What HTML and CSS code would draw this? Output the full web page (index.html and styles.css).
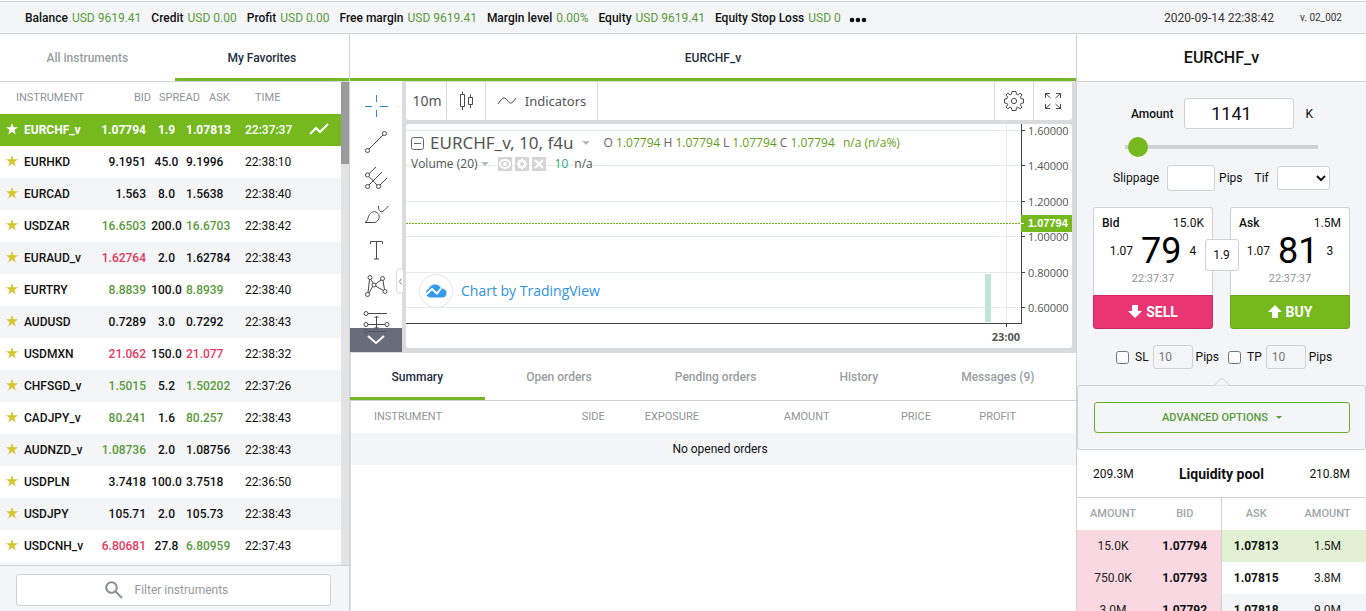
FILE: index.html
```html
<!DOCTYPE html>
<html lang="en">
<head>
<meta charset="utf-8">
<meta name="viewport" content="width=device-width, initial-scale=1">
<title>EURCHF_v</title>
<link rel="stylesheet" href="styles.css">
</head>
<body>
<svg class="sprite" aria-hidden="true">
  <symbol id="star" viewBox="0 0 12 12"><path d="M6 0l1.5 4.2H12L8.400 6.900 9.700 11.500 6 8.800 2.300 11.500 3.600 6.900 0 4.200h4.500z"/></symbol>
</svg>
<div class="app">
  <header class="topbar">
    <dl class="account">
      <div><dt>Balance</dt><dd>USD 9619.41</dd></div>
      <div><dt>Credit</dt><dd>USD 0.00</dd></div>
      <div><dt>Profit</dt><dd>USD 0.00</dd></div>
      <div><dt>Free margin</dt><dd>USD 9619.41</dd></div>
      <div><dt>Margin level</dt><dd>0.00%</dd></div>
      <div><dt>Equity</dt><dd>USD 9619.41</dd></div>
      <div><dt>Equity Stop Loss</dt><dd>USD 0</dd></div>
    </dl>
    <button class="more" aria-label="More"><svg width="18" height="6" viewBox="0 0 18 6"><circle cx="3" cy="3" r="2.300"/><circle cx="9" cy="3" r="2.300"/><circle cx="15" cy="3" r="2.300"/></svg></button>
    <time class="clock">2020-09-14 22:38:42</time>
    <span class="version">v. 02_002</span>
  </header>

  <div class="columns">
    <aside class="instruments">
      <nav class="tabs halves">
        <button class="tab">All instruments</button>
        <button class="tab active">My Favorites</button>
      </nav>
      <div class="list">
        <table class="quotes">
          <colgroup><col class="q-fav"><col class="q-name"><col class="q-bid"><col class="q-spread"><col class="q-ask"><col class="q-time"><col></colgroup>
          <thead><tr><th class="h-name" colspan="2">INSTRUMENT</th><th class="h-bid">BID</th><th class="h-spread">SPREAD</th><th class="h-ask">ASK</th><th class="h-time">TIME</th><th></th></tr></thead>
          <tbody>
            <tr class="selected"><td class="fav"><svg><use href="#star"/></svg></td><td>EURCHF_v</td><td>1.07794</td><td>1.9</td><td>1.07813</td><td>22:37:37</td><td><svg class="trend" width="22" height="14" viewBox="0 0 22 14"><path d="M2 12l6-6 4 4 8-8"/></svg></td></tr>
            <tr><td class="fav"><svg><use href="#star"/></svg></td><td>EURHKD</td><td>9.1951</td><td>45.0</td><td>9.1996</td><td>22:38:10</td><td></td></tr>
            <tr><td class="fav"><svg><use href="#star"/></svg></td><td>EURCAD</td><td>1.563</td><td>8.0</td><td>1.5638</td><td>22:38:40</td><td></td></tr>
            <tr><td class="fav"><svg><use href="#star"/></svg></td><td>USDZAR</td><td class="up">16.6503</td><td>200.0</td><td class="up">16.6703</td><td>22:38:42</td><td></td></tr>
            <tr><td class="fav"><svg><use href="#star"/></svg></td><td>EURAUD_v</td><td class="down">1.62764</td><td>2.0</td><td>1.62784</td><td>22:38:43</td><td></td></tr>
            <tr><td class="fav"><svg><use href="#star"/></svg></td><td>EURTRY</td><td class="up">8.8839</td><td>100.0</td><td class="up">8.8939</td><td>22:38:40</td><td></td></tr>
            <tr><td class="fav"><svg><use href="#star"/></svg></td><td>AUDUSD</td><td>0.7289</td><td>3.0</td><td>0.7292</td><td>22:38:43</td><td></td></tr>
            <tr><td class="fav"><svg><use href="#star"/></svg></td><td>USDMXN</td><td class="down">21.062</td><td>150.0</td><td class="down">21.077</td><td>22:38:32</td><td></td></tr>
            <tr><td class="fav"><svg><use href="#star"/></svg></td><td>CHFSGD_v</td><td class="up">1.5015</td><td>5.2</td><td class="up">1.50202</td><td>22:37:26</td><td></td></tr>
            <tr><td class="fav"><svg><use href="#star"/></svg></td><td>CADJPY_v</td><td class="up">80.241</td><td>1.6</td><td class="up">80.257</td><td>22:38:43</td><td></td></tr>
            <tr><td class="fav"><svg><use href="#star"/></svg></td><td>AUDNZD_v</td><td class="up">1.08736</td><td>2.0</td><td>1.08756</td><td>22:38:43</td><td></td></tr>
            <tr><td class="fav"><svg><use href="#star"/></svg></td><td>USDPLN</td><td>3.7418</td><td>100.0</td><td>3.7518</td><td>22:36:50</td><td></td></tr>
            <tr><td class="fav"><svg><use href="#star"/></svg></td><td>USDJPY</td><td>105.71</td><td>2.0</td><td>105.73</td><td>22:38:43</td><td></td></tr>
            <tr><td class="fav"><svg><use href="#star"/></svg></td><td>USDCNH_v</td><td class="down">6.80681</td><td>27.8</td><td class="up">6.80959</td><td>22:37:43</td><td></td></tr>
          </tbody>
        </table>
        <div class="scrollbar"><div class="thumb"></div></div>
      </div>
      <div class="filter">
        <label class="filter-box">
          <svg width="18" height="18" viewBox="0 0 18 18"><circle cx="6.500" cy="6.500" r="5.300"/><path d="M10.500 10.500l6.500 6.500"/></svg>
          <input type="text" placeholder="Filter instruments" aria-label="Filter instruments">
        </label>
      </div>
    </aside>

    <main class="center">
      <nav class="tabs"><button class="tab active wide">EURCHF_v</button></nav>

      <section class="chart">
        <div class="tools">
          <button class="tool cross" aria-label="Crosshair"><svg viewBox="0 0 28 28"><path d="M14.500 3v7M14.500 18v7M3 14.500h7M18 14.500h8"/></svg></button>
          <button class="tool" aria-label="Trend line"><svg viewBox="0 0 28 28"><circle cx="5.500" cy="22.500" r="2"/><circle cx="22.500" cy="5.500" r="2"/><path d="M7 21L21 7"/></svg></button>
          <button class="tool" aria-label="Pitchfork"><svg viewBox="0 0 28 28"><circle cx="5.500" cy="11" r="2"/><circle cx="5.500" cy="22.500" r="2"/><circle cx="16.500" cy="22.500" r="2"/><path d="M7 9.500L14 3M7 21L20 8M18 21l7-7M7 12.500l8 8.500"/></svg></button>
          <button class="tool" aria-label="Brush"><svg viewBox="0 0 28 28"><path d="M3 22.500c3-1 2.500-5 4.500-8s6-4 8.500-1 1 7-3 9zM16.500 6c-.5 5 3 7.500 5.500 4.500L26.500 6"/></svg></button>
          <button class="tool" aria-label="Text"><svg viewBox="0 0 28 28"><path d="M8.500 8V5.500h12V8M14.500 5.500v17.500M12 23h5"/></svg></button>
          <button class="tool" aria-label="Patterns"><svg viewBox="0 0 28 28"><circle cx="8" cy="5.500" r="2"/><circle cx="20.500" cy="6.500" r="2"/><circle cx="5.500" cy="22.500" r="2"/><circle cx="23" cy="19.500" r="2"/><circle cx="12" cy="13" r="2"/><path d="M7.500 7.500L6 20.500M9 7.500l2.500 4M13.500 12L19 8M21 8.500l1.500 9M10.500 14.500L7 21M13.500 14l8 4.500"/></svg></button>
          <button class="tool" aria-label="Projection"><svg viewBox="0 0 28 28"><circle cx="4" cy="5.500" r="2"/><circle cx="4" cy="16.500" r="2"/><circle cx="25" cy="16.500" r="2"/><circle cx="4" cy="23.500" r="2"/><path d="M6 5.500h19M6 16.500h17M6 23.500h19M14.500 8v13M12.500 10l2-2 2 2M12.500 19l2 2 2-2"/></svg></button>
          <button class="scroll-down" aria-label="Scroll down"><svg width="18" height="10" viewBox="0 0 18 10"><path d="M1 1l8 7 8-7"/></svg></button>
          <button class="collapse" aria-label="Collapse toolbar"><svg width="3" height="7" viewBox="0 0 3 7"><path d="M2.500 .5L.5 3.500l2 3"/></svg></button>
        </div>

        <div class="chart-body">
          <div class="chartbar">
            <button class="period">10m</button>
            <button class="style" aria-label="Chart style"><svg width="16" height="20" viewBox="0 0 16 20"><path d="M2.500 3.500h4v12h-4zM4.500 .5v3M4.500 15.500V19M10.500 6.500h4v7h-4zM12.500 3.500v3M12.500 13.500v3.500"/></svg></button>
            <button class="indicators"><svg width="20" height="10" viewBox="0 0 20 10"><path d="M1 8c4-6 6-8 9-4s4 5 9-2"/></svg>Indicators</button>
            <button class="square push" aria-label="Settings"><svg width="22" height="22" viewBox="0 0 22 22"><circle cx="11" cy="11" r="2.600"/><path d="M9 1.500h4l.5 2.700 1.400.6L17.200 3.200 19 5l-1.700 2.200.6 1.400 2.600.4v4l-2.600.4-.6 1.400L19 17l-1.800 1.800-2.300-1.600-1.400.6-.5 2.700H9l-.5-2.700-1.400-.6-2.300 1.600L3 17l1.700-2.200-.6-1.400L1.500 13V9l2.600-.4.6-1.400L3 5l1.800-1.800 2.300 1.600 1.400-.6z"/></svg></button>
            <button class="square" aria-label="Full screen"><svg width="18" height="18" viewBox="0 0 18 18"><path d="M1.500 6V1.500H6M1.500 1.500L6.500 6M12 1.500h4.500V6M16.500 1.500L11.500 6M1.500 12v4.500H6M1.500 16.500L6.500 12M12 16.500h4.500V12M16.500 16.500L11.500 12"/></svg></button>
          </div>

          <div class="pane">
            <div class="plot">
              <svg class="grid" width="100%" height="200">
                <path class="gridline" d="M0 6.500h4000M0 41.500h4000M0 77.500h4000M0 112.500h4000M0 148.500h4000M0 183.500h4000"/>
                <svg x="100%" overflow="visible"><path class="gridline" d="M-14.500 0v199"/><rect class="volume-bar" x="-36" y="150" width="6" height="48"/></svg>
                <path class="last" d="M0 99.500h4000"/>
                <path class="axis" d="M0 199.500h4000"/>
              </svg>
              <div class="legend">
                <div class="legend-row title">
                  <svg width="13" height="13" viewBox="0 0 13 13"><rect x=".5" y=".5" width="12" height="12" rx="2"/><path d="M3 6.500h7"/></svg>
                  <h2>EURCHF_v, 10, f4u</h2><i class="caret"></i>
                  <p class="ohlc">O <b>1.07794</b> H <b>1.07794</b> L <b>1.07794</b> C <b>1.07794</b> <b class="change">n/a (n/a%)</b></p>
                </div>
                <div class="legend-row volume">
                  <span>Volume (20)</span><i class="caret"></i>
                  <span class="minis">
                    <button aria-label="Hide"><svg viewBox="0 0 14 14"><ellipse cx="7" cy="7" rx="5" ry="4"/><circle cx="7" cy="7" r="1"/></svg></button>
                    <button aria-label="Format"><svg viewBox="0 0 14 14"><circle cx="7" cy="7" r="3"/><path d="M7 2v2M7 10v2M2 7h2M10 7h2M3.500 3.500L5 5M9 9l1.500 1.500M10.500 3.500L9 5M5 9l-1.500 1.500"/></svg></button>
                    <button aria-label="Delete"><svg viewBox="0 0 14 14"><path d="M3 3l8 8M11 3l-8 8"/></svg></button>
                  </span>
                  <span class="vol-value">10</span><span>n/a</span>
                </div>
              </div>
              <a class="brand" href="#">
                <span class="brand-mark"><svg width="22" height="14" viewBox="0 0 22 14"><path class="cloud" d="M5 13.500a4.500 4.500 0 0 1-1.500-8.500C5 2 7 .5 10 .5c3 0 5 1.500 6 4 3.500 0 5.500 2 5.500 4.500S20 13.500 17 13.500z"/><path class="swoosh" d="M1 10.500L7 5l5 4.500 4-5"/></svg></span>
                Chart by TradingView
              </a>
            </div>
            <div class="prices">
              <svg width="51" height="200">
                <path class="axis" d="M.5 0v200M0 6.500h4M0 41.500h4M0 77.500h4M0 112.500h4M0 148.500h4M0 183.500h4"/>
                <g class="ticks"><text x="7" y="11">1.60000</text><text x="7" y="46">1.40000</text><text x="7" y="82">1.20000</text><text x="7" y="117">1.00000</text><text x="7" y="153">0.80000</text><text x="7" y="188">0.60000</text></g>
                <rect class="tag" y="91" width="51" height="17"/><path class="tag-tick" d="M0 99.500h3"/><text class="tag-text" x="7" y="103">1.07794</text>
              </svg>
            </div>
            <div class="times"><span>23:00</span></div>
          </div>
        </div>
      </section>

      <section class="orders">
        <nav class="tabs">
          <button class="tab active">Summary</button>
          <button class="tab">Open orders</button>
          <button class="tab">Pending orders</button>
          <button class="tab">History</button>
          <button class="tab">Messages (9)</button>
        </nav>
        <table>
          <colgroup><col class="c1"><col class="c2"><col class="c3"><col class="c4"><col class="c5"><col></colgroup>
          <thead><tr><th class="first">INSTRUMENT</th><th>SIDE</th><th>EXPOSURE</th><th>AMOUNT</th><th>PRICE</th><th>PROFIT</th></tr></thead>
          <tbody><tr><td colspan="6">No opened orders</td></tr></tbody>
        </table>
      </section>
    </main>

    <aside class="ticket">
      <h1>EURCHF_v</h1>
      <form class="order" onsubmit="return false">
        <div class="amount-row">
          <label for="amount">Amount</label>
          <input id="amount" type="text" value="1141">
          <span>K</span>
        </div>
        <input class="slider" type="range" min="0" max="100" value="2" aria-label="Amount slider">
        <div class="options-row">
          <label for="slippage">Slippage</label>
          <input id="slippage" type="text"><span>Pips</span>
          <label class="tif" for="tif">Tif</label>
          <select id="tif"><option></option></select>
        </div>
        <div class="deal">
          <div class="side">
            <div class="quote">
              <div class="side-head"><b>Bid</b><span>15.0K</span></div>
              <div class="rate"><span>1.07</span><strong>79</strong><span>4</span></div>
              <time>22:37:37</time>
            </div>
            <button class="sell"><svg width="14" height="14" viewBox="0 0 14 14"><path d="M4 0h6v6h4l-7 7-7-7h4z"/></svg>SELL</button>
          </div>
          <div class="side">
            <div class="quote">
              <div class="side-head"><b>Ask</b><span>1.5M</span></div>
              <div class="rate"><span>1.07</span><strong>81</strong><span>3</span></div>
              <time>22:37:37</time>
            </div>
            <button class="buy"><svg width="14" height="14" viewBox="0 0 14 14"><path d="M4 13h6V7h4L7 0 0 7h4z"/></svg>BUY</button>
          </div>
          <span class="spread">1.9</span>
        </div>
        <div class="stops">
          <input id="sl" type="checkbox"><label for="sl">SL</label><input class="pips" type="text" value="10" aria-label="Stop loss pips"><span>Pips</span>
          <input id="tp" class="second" type="checkbox"><label for="tp">TP</label><input class="pips" type="text" value="10" aria-label="Take profit pips"><span>Pips</span>
        </div>
        <div class="advanced">
          <svg class="notch" width="16" height="9" viewBox="0 0 16 9"><path d="M0 8.500L8 1l8 7.500"/></svg>
          <button>ADVANCED OPTIONS <i></i></button>
        </div>
      </form>
      <section class="pool">
        <div class="pool-head"><span>209.3M</span><h2>Liquidity pool</h2><span>210.8M</span></div>
        <table>
          <colgroup><col class="p1"><col class="p1"><col class="p3"><col></colgroup>
          <thead><tr><th>AMOUNT</th><th>BID</th><th class="ask">ASK</th><th>AMOUNT</th></tr></thead>
          <tbody>
            <tr><td class="pink">15.0K</td><td class="pink"><b>1.07794</b></td><td class="ask green"><b>1.07813</b></td><td class="green">1.5M</td></tr>
            <tr><td class="pink">750.0K</td><td class="pink"><b>1.07793</b></td><td class="ask"><b>1.07815</b></td><td>3.8M</td></tr>
            <tr><td class="pink">3.0M</td><td class="pink"><b>1.07792</b></td><td class="ask grey"><b>1.07818</b></td><td class="grey">9.0M</td></tr>
          </tbody>
        </table>
      </section>
    </aside>
  </div>
</div>
</body>
</html>
```
FILE: styles.css
```css
* { box-sizing: border-box; }
body { margin: 0; font: 12px/16px Roboto, sans-serif; color: #111; background: #fff; }
button { border: 0; padding: 0; background: none; font: inherit; color: inherit; cursor: pointer; }
input, select { font: inherit; color: inherit; }
h1, h2, p, dl, dd { margin: 0; }
svg { display: block; fill: none; }
table { width: 100%; border-collapse: collapse; table-layout: fixed; }
th { font-size: 11px; font-weight: 400; color: #8f9599; }
td, th { padding: 0; height: 32px; }
b { font-weight: 500; }
.sprite { position: absolute; width: 0; height: 0; }

.app { display: flex; flex-direction: column; height: 100vh; overflow: hidden; }
.columns { display: flex; flex: 1; min-height: 0; }

/* Top bar */
.topbar { display: flex; align-items: center; flex: none; height: 34px; padding: 2px 24px 0 25px; background: #f3f5f7; border-top: 1px solid #fff; border-bottom: 1px solid #cfd3d5; box-shadow: inset 0 1px #cfd3d5; white-space: nowrap; }
.account { display: flex; gap: 10px; }
.account div { display: flex; gap: 4px; }
.account dt { font-weight: 500; }
.account dd { color: #5b9a3c; }
.more { margin-left: 8px; padding-top: 4px; }
.more svg { fill: #111; }
.clock { margin-left: auto; color: #333; }
.version { margin-left: 26px; font-size: 10px; color: #333; }

/* Tabs */
.tabs { display: flex; flex: none; height: 48px; border-bottom: 1px solid #cfd3d5; }
.tab { flex: 1 1 auto; height: 47px; border-bottom: 3px solid transparent; padding-top: 3px; font-weight: 500; color: #989ea1; }
.tab.active { color: #1e2e3e; border-bottom-color: #76b82a; }
.halves .tab { flex: 1; }

/* Instruments */
.instruments { display: flex; flex-direction: column; flex: none; width: 350px; border-right: 1px solid #cfd3d5; }
.list { display: flex; flex: 1; min-height: 0; overflow: hidden; background: #f3f5f7; align-items: flex-start; }
.quotes { background: #fff; font-weight: 500; }
.quotes th { text-align: left; white-space: nowrap; }
.q-fav { width: 24px; }
.q-name { width: 74px; }
.q-bid { width: 53px; }
.q-spread { width: 31px; }
.q-ask { width: 57px; }
.q-time { width: 64px; }
.quotes .h-name { padding-left: 16px; }
.quotes .h-bid { text-align: right; }
.quotes .h-spread { padding-left: 8px; }
.quotes .h-ask { padding-left: 27px; }
.quotes .h-time { padding-left: 16px; }
.quotes tbody tr:nth-child(odd) { background: #f3f5f7; }
.quotes td:nth-child(1) { padding: 0 0 2px 6px; }
.quotes td:nth-child(3) { text-align: right; padding-right: 5px; }
.quotes td:nth-child(4) { text-align: center; white-space: nowrap; }
.quotes td:nth-child(5) { padding-left: 4px; }
.quotes td:nth-child(6) { padding-left: 6px; font-weight: 400; }
.quotes td:nth-child(7) { padding: 0 0 2px 5px; }
.fav svg { width: 12px; height: 12px; fill: #d6c52e; }
.up { color: #5b9a3c; }
.down { color: #e5395f; }
.quotes tbody tr.selected { background: #76b91f; color: #fff; }
.selected td:nth-child(2), .selected td:nth-child(3), .selected td:nth-child(4), .selected td:nth-child(5) { font-weight: 700; }
.selected td:nth-child(6) { font-weight: 500; }
.selected .fav svg { fill: #fff; }
.trend { stroke: #fff; stroke-width: 2; }
.scrollbar { flex: none; width: 8px; align-self: stretch; background: #e3e3e3; }
.thumb { height: 82px; background: #9b9b9b; }
.filter { flex: none; padding: 8px 18px 5px 16px; background: #f3f5f7; border-top: 1px solid #cfd3d5; }
.filter-box { display: flex; align-items: center; justify-content: center; gap: 12px; height: 32px; background: #fff; border: 1px solid #cfd3d5; border-radius: 3px; }
.filter-box svg { stroke: #8a8f92; stroke-width: 2; }
.filter-box input { width: 108px; border: 0; padding: 0; outline: 0; background: none; }
.filter-box input::placeholder { color: #9a9a9a; }

/* Chart */
.center { display: flex; flex-direction: column; flex: 1; min-width: 0; }
.center > .tabs { border-bottom: 0; height: 47px; }
.chart { display: flex; flex: none; gap: 4px; height: 272px; padding-right: 4px; background: #dadbdc; font-family: "Open Sans", sans-serif; color: #555; }
.tools { position: relative; display: flex; flex-direction: column; flex: none; width: 52px; height: 271px; padding-top: 7px; background: #fff; }
.tool { flex: none; height: 36px; display: grid; place-items: center; }
.tool svg { width: 28px; height: 28px; stroke: #4a4a4a; }
.tool.cross svg { stroke: #2d8ad0; }
.scroll-down { position: absolute; left: 0; right: 0; bottom: 0; height: 24px; display: grid; place-items: center; background: rgba(83, 86, 102, .88); }
.scroll-down svg { stroke: #fff; stroke-width: 2; }
.collapse { position: absolute; right: -2px; top: 187px; width: 8px; height: 26px; display: grid; place-items: center; background: #fff; border: 1px solid #dadbdc; border-radius: 4px; }
.collapse svg { stroke: #888; }
.chart-body { flex: 1; min-width: 0; display: flex; flex-direction: column; gap: 4px; padding: 1px 0 5px; }
.chartbar { display: flex; flex: none; height: 38px; background: #fff; border-radius: 0 0 3px 3px; font: 13px/18px "Noto Sans", sans-serif; }
.chartbar button { display: flex; align-items: center; justify-content: center; border-right: 1px solid #dadbdc; }
.chartbar svg { stroke: #4a4a4a; }
.chartbar .period { width: 41px; padding-left: 2px; font-size: 14px; }
.chartbar .style { width: 39px; }
.chartbar .indicators { width: 112px; gap: 8px; }
.chartbar .square { width: 39px; border: 0; border-left: 1px solid #dadbdc; }
.chartbar .push { margin-left: auto; }
.pane { flex: 1; display: grid; grid-template: 200px 1fr / 1fr 51px; overflow: hidden; background: #fff; border-radius: 3px; }
.plot { position: relative; overflow: hidden; }
.gridline { stroke: #e1ecef; }
.volume-bar { fill: #bfe6d3; }
.axis { stroke: #444; }
.last { stroke: #6fae12; stroke-dasharray: 2 1; }
.ticks { fill: #555; font: 11px "Open Sans", sans-serif; }
.tag { fill: #76b91f; }
.tag-tick { stroke: #fff; }
.tag-text { fill: #fff; font: bold 11px "Liberation Sans", sans-serif; }
.times { position: relative; grid-column: 1 / -1; padding: 5px 52px 0 0; text-align: right; font: bold 11px/16px "Open Sans", sans-serif; }
.times::before { content: ""; position: absolute; right: 65px; top: 0; width: 1px; height: 3px; background: #444; }
.legend { position: absolute; left: 5px; top: 8px; white-space: nowrap; }
.legend-row { display: flex; align-items: center; }
.title { height: 22px; }
.title > svg { stroke: #666; }
.title h2 { margin-left: 6px; font: 17px/22px "Noto Sans", sans-serif; }
.caret { margin-left: 8px; border: 4px solid transparent; border-top-color: #bbb; border-bottom: 0; }
.ohlc { margin-left: 14px; color: #666; }
.ohlc b { font-weight: 400; color: #5f9f17; }
.change { margin-left: 5px; }
.volume { height: 20px; }
.volume .caret { margin-left: 3px; }
.minis { display: flex; gap: 3px; margin: 0 9px 0 9px; }
.minis button { width: 14px; height: 14px; background: #d5d5d5; }
.minis svg { stroke: #fff; stroke-width: 2; }
.vol-value { margin-right: 6px; color: #2aa87a; }
.brand { position: absolute; left: 13px; top: 150px; display: flex; align-items: center; gap: 8px; color: #2d93dc; text-decoration: none; font: 14px/20px "Open Sans", sans-serif; }
.brand-mark { display: grid; place-items: center; width: 34px; height: 34px; background: #fff; border: 1px solid #e6e6e6; border-radius: 50%; }
.cloud { fill: #379bec; }
.swoosh { stroke: #fff; stroke-width: 2; }

/* Orders */
.orders { flex: 1; border-left: 1px solid #dadbdc; }
.orders .tabs { margin-left: -1px; }
.orders th { text-align: right; }
.orders .first { text-align: left; padding-left: 23px; }
.orders .c1 { width: 28%; }
.orders .c2 { width: 7%; }
.orders .c3 { width: 13%; }
.orders .c4 { width: 18%; }
.orders .c5 { width: 14%; }
.orders th:last-child { padding-right: 60px; }
.orders td { padding-left: 13px; text-align: center; background: #f3f5f7; }

/* Ticket */
.ticket { flex: none; width: 290px; border-left: 1px solid #cfd3d5; background: #f3f5f7; }
.ticket h1 { height: 48px; background: #fff; border-bottom: 1px solid #cfd3d5; font-size: 16px; line-height: 48px; font-weight: 500; text-align: center; }
.order input[type="text"], .order select { border: 1px solid #cfd3d5; border-radius: 3px; background: #fff; padding: 0; }
.order { display: flex; flex-direction: column; }
.amount-row { display: flex; align-items: center; gap: 11px; padding: 16px 0 8px 54px; }
.amount-row label { font-weight: 500; }
.amount-row input { width: 110px; height: 31px; font-size: 18px; text-align: center; }
.amount-row input[type="text"] { padding-right: 16px; }
.slider { appearance: none; width: 193px; height: 20px; margin: 0 0 8px 48px; background: linear-gradient(#cfd3d5, #cfd3d5) center / 100% 4px no-repeat; }
.slider::-webkit-slider-thumb { appearance: none; width: 20px; height: 20px; border-radius: 50%; background: #76b91f; }
.options-row { display: flex; align-items: center; height: 26px; padding-left: 36px; gap: 4px; }
.options-row input { width: 48px; height: 26px; margin-left: 4px; }
.options-row .tif { margin: 0 4px 0 8px; }
.options-row select { width: 53px; height: 24px; }
.deal { position: relative; display: flex; gap: 17px; margin: 16px 16px 0; }
.side { flex: 1; }
.quote { height: 88px; padding: 7px 8px 0; background: #fff; border: 1px solid #cfd3d5; border-bottom: 0; border-radius: 3px 3px 0 0; }
.side-head { display: flex; justify-content: space-between; }
.rate { display: flex; align-items: center; justify-content: center; gap: 8px; height: 40px; }
.rate strong { font-size: 36px; line-height: 40px; font-weight: 400; color: #000; }
.quote time { display: block; text-align: center; font-size: 11px; color: #8f9599; }
.side button { display: flex; align-items: center; justify-content: center; gap: 4px; width: 100%; height: 34px; border-radius: 0 0 3px 3px; color: #fff; font-size: 14px; font-weight: 700; }
.side button svg { fill: #fff; }
.side .sell { background: #e93572; border: 1px solid #cb2b62; }
.side .buy { background: #76b91f; border: 1px solid #69a61c; }
.spread { position: absolute; left: calc(50% - 17px); top: 32px; width: 34px; height: 32px; line-height: 30px; text-align: center; background: #fff; border: 1px solid #cfd3d5; border-radius: 3px; }
.stops { display: flex; align-items: center; height: 24px; margin: 16px 0 16px 39px; }
.stops label { margin: 0 4px 0 6px; }
.stops input[type="checkbox"] { width: 13px; height: 13px; margin: 0; }
.stops input.second[type="checkbox"] { margin-left: 9px; }
.stops input.pips { width: 40px; height: 24px; margin-right: 3px; padding-left: 5px; background: #f3f5f7; color: #777; }
.advanced { position: relative; padding: 16px 15px 16px 16px; border: 1px solid #cfd3d5; border-radius: 3px; }
.notch { position: absolute; left: calc(50% - 8px); top: -9px; fill: #f3f5f7; stroke: #cfd3d5; }
.advanced button { display: flex; align-items: center; justify-content: center; gap: 8px; width: 100%; height: 31px; border: 1px solid #6fae2b; border-radius: 3px; color: #5b9a3c; font-weight: 500; font-size: 11px; }
.advanced i { border: 3px solid transparent; border-top-color: #5b9a3c; border-bottom: 0; }
.pool { background: #fff; }
.pool-head { display: flex; align-items: center; justify-content: space-between; height: 48px; padding: 0 16px; border-bottom: 1px solid #cfd3d5; }
.pool h2 { font-size: 14px; font-weight: 700; }
.p1 { width: 72px; }
.p3 { width: 70px; }
.pool td, .pool th { text-align: center; }
.pool th { font-weight: 500; color: #a0a6a9; }
.pool td:last-child, .pool th:last-child { padding-right: 2px; }
.pool td { color: #222; }
.pool td b { font-weight: 700; color: #111; }
.pool .ask { border-left: 1px solid #cfd3d5; }
.pool .pink { background: #f9d8e1; }
.pool .green { background: #e2f1d3; }
.pool .grey { background: #f3f5f7; }
```
